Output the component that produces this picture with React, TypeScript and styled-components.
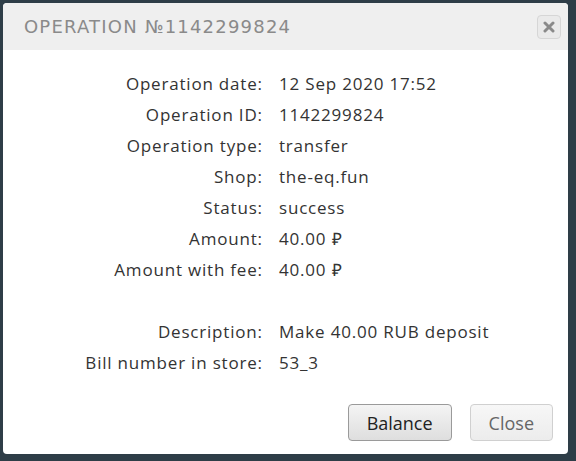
import React from 'react';
import styled, { createGlobalStyle } from 'styled-components';

const GlobalStyle = createGlobalStyle`
  html, body {
    margin: 0;
    padding: 0;
    background: #2e3d47;
  }
  body {
    font-family: 'Open Sans', 'Liberation Sans', sans-serif;
  }
`;

type Row = { label: string; value: string } | null;

const rows: Row[] = [
  { label: 'Operation date:', value: '12 Sep 2020 17:52' },
  { label: 'Operation ID:', value: '1142299824' },
  { label: 'Operation type:', value: 'transfer' },
  { label: 'Shop:', value: 'the-eq.fun' },
  { label: 'Status:', value: 'success' },
  { label: 'Amount:', value: '40.00 ₽' },
  { label: 'Amount with fee:', value: '40.00 ₽' },
  null,
  { label: 'Description:', value: 'Make 40.00 RUB deposit' },
  { label: 'Bill number in store:', value: '53_3' },
];

export default function App() {
  return (
    <>
      <GlobalStyle />
      <Screen>
        <Dialog>
          <Header>
            <Title>Operation №1142299824</Title>
            <CloseX type="button" aria-label="Close">
              <svg viewBox="0 0 12 12" width="12" height="12">
                <path
                  d="M2 2 L10 10 M10 2 L2 10"
                  stroke="#8a8a8a"
                  strokeWidth="3"
                  strokeLinecap="round"
                />
              </svg>
            </CloseX>
          </Header>
          <Body>
            <Details>
              {rows.map((r, i) =>
                r ? (
                  <React.Fragment key={i}>
                    <Label>{r.label}</Label>
                    <Value>{r.value}</Value>
                  </React.Fragment>
                ) : (
                  <Spacer key={i} />
                )
              )}
            </Details>
          </Body>
          <Footer>
            <Button>Balance</Button>
            <Button $muted>Close</Button>
          </Footer>
        </Dialog>
      </Screen>
    </>
  );
}

const Screen = styled.div`
  width: 576px;
  height: 461px;
  padding: 3px 8px 7px 3px;
  box-sizing: border-box;
`;

const Dialog = styled.div`
  width: 565px;
  height: 451px;
  background: #fff;
  border-radius: 4px;
  overflow: hidden;
  display: flex;
  flex-direction: column;
`;

const Header = styled.div`
  height: 47px;
  background: #efefef;
  display: flex;
  align-items: center;
  justify-content: space-between;
  padding: 0 7px 0 21px;
  box-sizing: border-box;
`;

const Title = styled.h2`
  margin: 0;
  font-family: 'DejaVu Sans', sans-serif;
  font-weight: normal;
  font-size: 18px;
  letter-spacing: 1.2px;
  text-transform: uppercase;
  color: #8a8a8a;
`;

const CloseX = styled.button`
  width: 24px;
  height: 24px;
  padding: 0;
  display: flex;
  align-items: center;
  justify-content: center;
  background: #eaeaea;
  border: 1px solid #d6d6d6;
  border-radius: 4px;
  cursor: pointer;
`;

const Body = styled.div`
  flex: 1;
  padding: 18px 0 0;
`;

const Details = styled.div`
  display: grid;
  grid-template-columns: 259px 1fr;
  column-gap: 17px;
  grid-auto-rows: 31px;
  align-items: center;
  font-size: 17px;
  letter-spacing: 0.8px;
  color: #333;
`;

const Label = styled.div`
  text-align: right;
  margin-right: -0.8px;
`;

const Value = styled.div``;

const Spacer = styled.div`
  grid-column: 1 / -1;
`;

const Footer = styled.div`
  display: flex;
  justify-content: flex-end;
  gap: 18px;
  padding: 0 15px 13px;
`;

const Button = styled.button<{ $muted?: boolean }>`
  height: 37px;
  padding: 0 ${p => (p.$muted ? '18px' : '18px')};
  font-family: 'Open Sans', 'Liberation Sans', sans-serif;
  font-size: 18px;
  color: ${p => (p.$muted ? '#666' : '#222')};
  background: linear-gradient(${p => (p.$muted ? '#f7f7f7, #ececec' : '#f4f4f4, #dedede')});
  border: 1px solid ${p => (p.$muted ? '#d0d0d0' : '#9a9a9a')};
  border-radius: 4px;
  cursor: pointer;
`;
